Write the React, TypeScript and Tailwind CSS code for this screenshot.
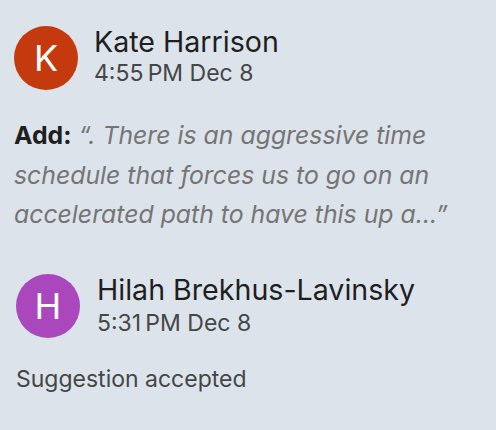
const font = { fontFamily: 'Inter, Roboto, "Noto Sans", Arial, sans-serif' };

type Reply = {
  initial: string;
  color: string;
  name: string;
  time: string;
};

function Header({ initial, color, name, time }: Reply) {
  return (
    <div className="flex items-start gap-[16px]">
      <div
        className={`mt-[1px] flex h-16 w-16 shrink-0 items-center justify-center rounded-full text-[36px] leading-none text-white ${color}`}
      >
        {initial}
      </div>
      <div className="flex flex-col">
        <div className="text-[28.6px] leading-[34px] text-[#1f1f1f]">{name}</div>
        <div className="text-[23px] leading-[28px] text-[#444746]">{time}</div>
      </div>
    </div>
  );
}

export default function App() {
  return (
    <div className="h-[430px] w-[496px] overflow-hidden bg-[#dde3ea]" style={font}>
      <div className="pl-[14px] pr-[20px] pt-[25px]">
        <Header initial="K" color="bg-[#c5390e]" name="Kate Harrison" time={'4:55\u202FPM Dec 8'} />
        <p className="mt-[26px] text-[24.8px] leading-[39.5px]">
          <span className="font-bold text-[#1f1f1f]">Add:</span>{' '}
          <span className="italic text-[#757575]">
            “. There is an aggressive time schedule that forces us to go on an accelerated path to have this up a…”
          </span>
        </p>
      </div>
      <div className="pl-[16px] pr-[20px] pt-[38px]">
        <div className="flex items-start gap-[17px]">
          <div className="mt-[1.5px] flex h-16 w-16 shrink-0 items-center justify-center rounded-full bg-[#ab47bc] text-[36px] leading-none text-white">
            H
          </div>
          <div className="flex flex-col">
            <div className="text-[28.6px] leading-[34px] text-[#1f1f1f]">Hilah Brekhus-Lavinsky</div>
            <div className="mt-[2px] text-[23px] leading-[28px] text-[#444746]">{'5:31\u202FPM Dec 8'}</div>
          </div>
        </div>
        <p className="mt-[27px] text-[23px] leading-[28px] text-[#444746]">Suggestion accepted</p>
      </div>
    </div>
  );
}
